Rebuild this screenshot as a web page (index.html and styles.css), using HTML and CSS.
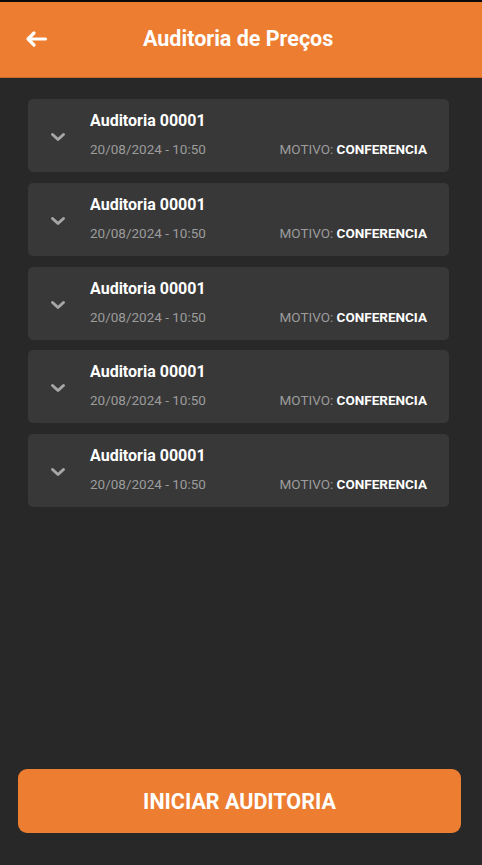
FILE: index.html
```html
<!DOCTYPE html>
<html lang="pt-BR">
<head>
  <meta charset="UTF-8" />
  <meta name="viewport" content="width=device-width, initial-scale=1" />
  <title>Auditoria de Preços</title>
  <link rel="stylesheet" href="styles.css">
</head>
<body>
  <div class="app">
    <header class="topbar">
      <button class="back-btn" aria-label="Voltar">
        <svg width="24" height="24" viewBox="0 0 24 24"><path d="M21.5 12H4M10 6l-6 6 6 6" fill="none" stroke="#fff" stroke-width="3.2" stroke-linecap="round" stroke-linejoin="round"/></svg>
      </button>
      <h1>Auditoria de Preços</h1>
    </header>

    <main class="list">
      <div class="audit-card">
        <span class="chevron"><svg width="16" height="10" viewBox="0 0 16 10"><path d="M2.5 2.5l5.5 5 5.5-5" fill="none" stroke="#a6a6a6" stroke-width="3" stroke-linecap="round" stroke-linejoin="round"/></svg></span>
        <div class="audit-info">
          <div class="audit-title">Auditoria 00001</div>
          <div class="audit-meta">
            <span>20/08/2024 - 10:50</span>
            <span>MOTIVO: <b>CONFERENCIA</b></span>
          </div>
        </div>
      </div>
      <div class="audit-card">
        <span class="chevron"><svg width="16" height="10" viewBox="0 0 16 10"><path d="M2.5 2.5l5.5 5 5.5-5" fill="none" stroke="#a6a6a6" stroke-width="3" stroke-linecap="round" stroke-linejoin="round"/></svg></span>
        <div class="audit-info">
          <div class="audit-title">Auditoria 00001</div>
          <div class="audit-meta">
            <span>20/08/2024 - 10:50</span>
            <span>MOTIVO: <b>CONFERENCIA</b></span>
          </div>
        </div>
      </div>
      <div class="audit-card">
        <span class="chevron"><svg width="16" height="10" viewBox="0 0 16 10"><path d="M2.5 2.5l5.5 5 5.5-5" fill="none" stroke="#a6a6a6" stroke-width="3" stroke-linecap="round" stroke-linejoin="round"/></svg></span>
        <div class="audit-info">
          <div class="audit-title">Auditoria 00001</div>
          <div class="audit-meta">
            <span>20/08/2024 - 10:50</span>
            <span>MOTIVO: <b>CONFERENCIA</b></span>
          </div>
        </div>
      </div>
      <div class="audit-card">
        <span class="chevron"><svg width="16" height="10" viewBox="0 0 16 10"><path d="M2.5 2.5l5.5 5 5.5-5" fill="none" stroke="#a6a6a6" stroke-width="3" stroke-linecap="round" stroke-linejoin="round"/></svg></span>
        <div class="audit-info">
          <div class="audit-title">Auditoria 00001</div>
          <div class="audit-meta">
            <span>20/08/2024 - 10:50</span>
            <span>MOTIVO: <b>CONFERENCIA</b></span>
          </div>
        </div>
      </div>
      <div class="audit-card">
        <span class="chevron"><svg width="16" height="10" viewBox="0 0 16 10"><path d="M2.5 2.5l5.5 5 5.5-5" fill="none" stroke="#a6a6a6" stroke-width="3" stroke-linecap="round" stroke-linejoin="round"/></svg></span>
        <div class="audit-info">
          <div class="audit-title">Auditoria 00001</div>
          <div class="audit-meta">
            <span>20/08/2024 - 10:50</span>
            <span>MOTIVO: <b>CONFERENCIA</b></span>
          </div>
        </div>
      </div>
    </main>

    <footer class="footer">
      <button class="start-btn">INICIAR AUDITORIA</button>
    </footer>
  </div>
</body>
</html>
```

FILE: styles.css
```css
* {
  box-sizing: border-box;
}

body {
  margin: 0;
  background: #282828;
  font-family: Roboto, 'Noto Sans', sans-serif;
  color: #fff;
}

.app {
  height: 865px;
  display: flex;
  flex-direction: column;
  border-top: 2px solid #0a0a0a;
}

.topbar {
  height: 76px;
  background: #ed7d31;
  border-bottom: 1px solid #c9682a;
  display: flex;
  align-items: center;
  padding: 0 0 0 24px;
}

.back-btn {
  background: none;
  border: none;
  padding: 0;
  width: 24px;
  height: 24px;
  cursor: pointer;
  margin-top: -1px;
}

.topbar h1 {
  margin: -2px 0 0 95px;
  font-size: 21.5px;
  font-weight: bold;
}

.list {
  flex: 1;
  display: flex;
  flex-direction: column;
  gap: 10.75px;
  padding: 21px 33px 0 28px;
}

.audit-card {
  height: 73px;
  background: #383838;
  border-radius: 5px;
  display: flex;
  align-items: center;
  padding: 0 22px 0 22px;
}

.chevron {
  width: 16px;
  display: flex;
  margin-top: 3px;
}

.audit-info {
  flex: 1;
  margin-left: 24px;
  margin-top: -3px;
}

.audit-title {
  font-size: 16px;
  font-weight: bold;
  line-height: 20px;
}

.audit-meta {
  display: flex;
  justify-content: space-between;
  font-size: 13.5px;
  color: #9c9c9c;
  margin-top: 10px;
  line-height: 16px;
}

.audit-meta b {
  color: #fff;
}

.footer {
  padding: 0 21px 32px 18px;
}

.start-btn {
  width: 100%;
  height: 64px;
  background: #ed7d31;
  color: #fff;
  border: none;
  border-radius: 9px;
  font-family: inherit;
  font-size: 21.5px;
  font-weight: bold;
  cursor: pointer;
}
```
